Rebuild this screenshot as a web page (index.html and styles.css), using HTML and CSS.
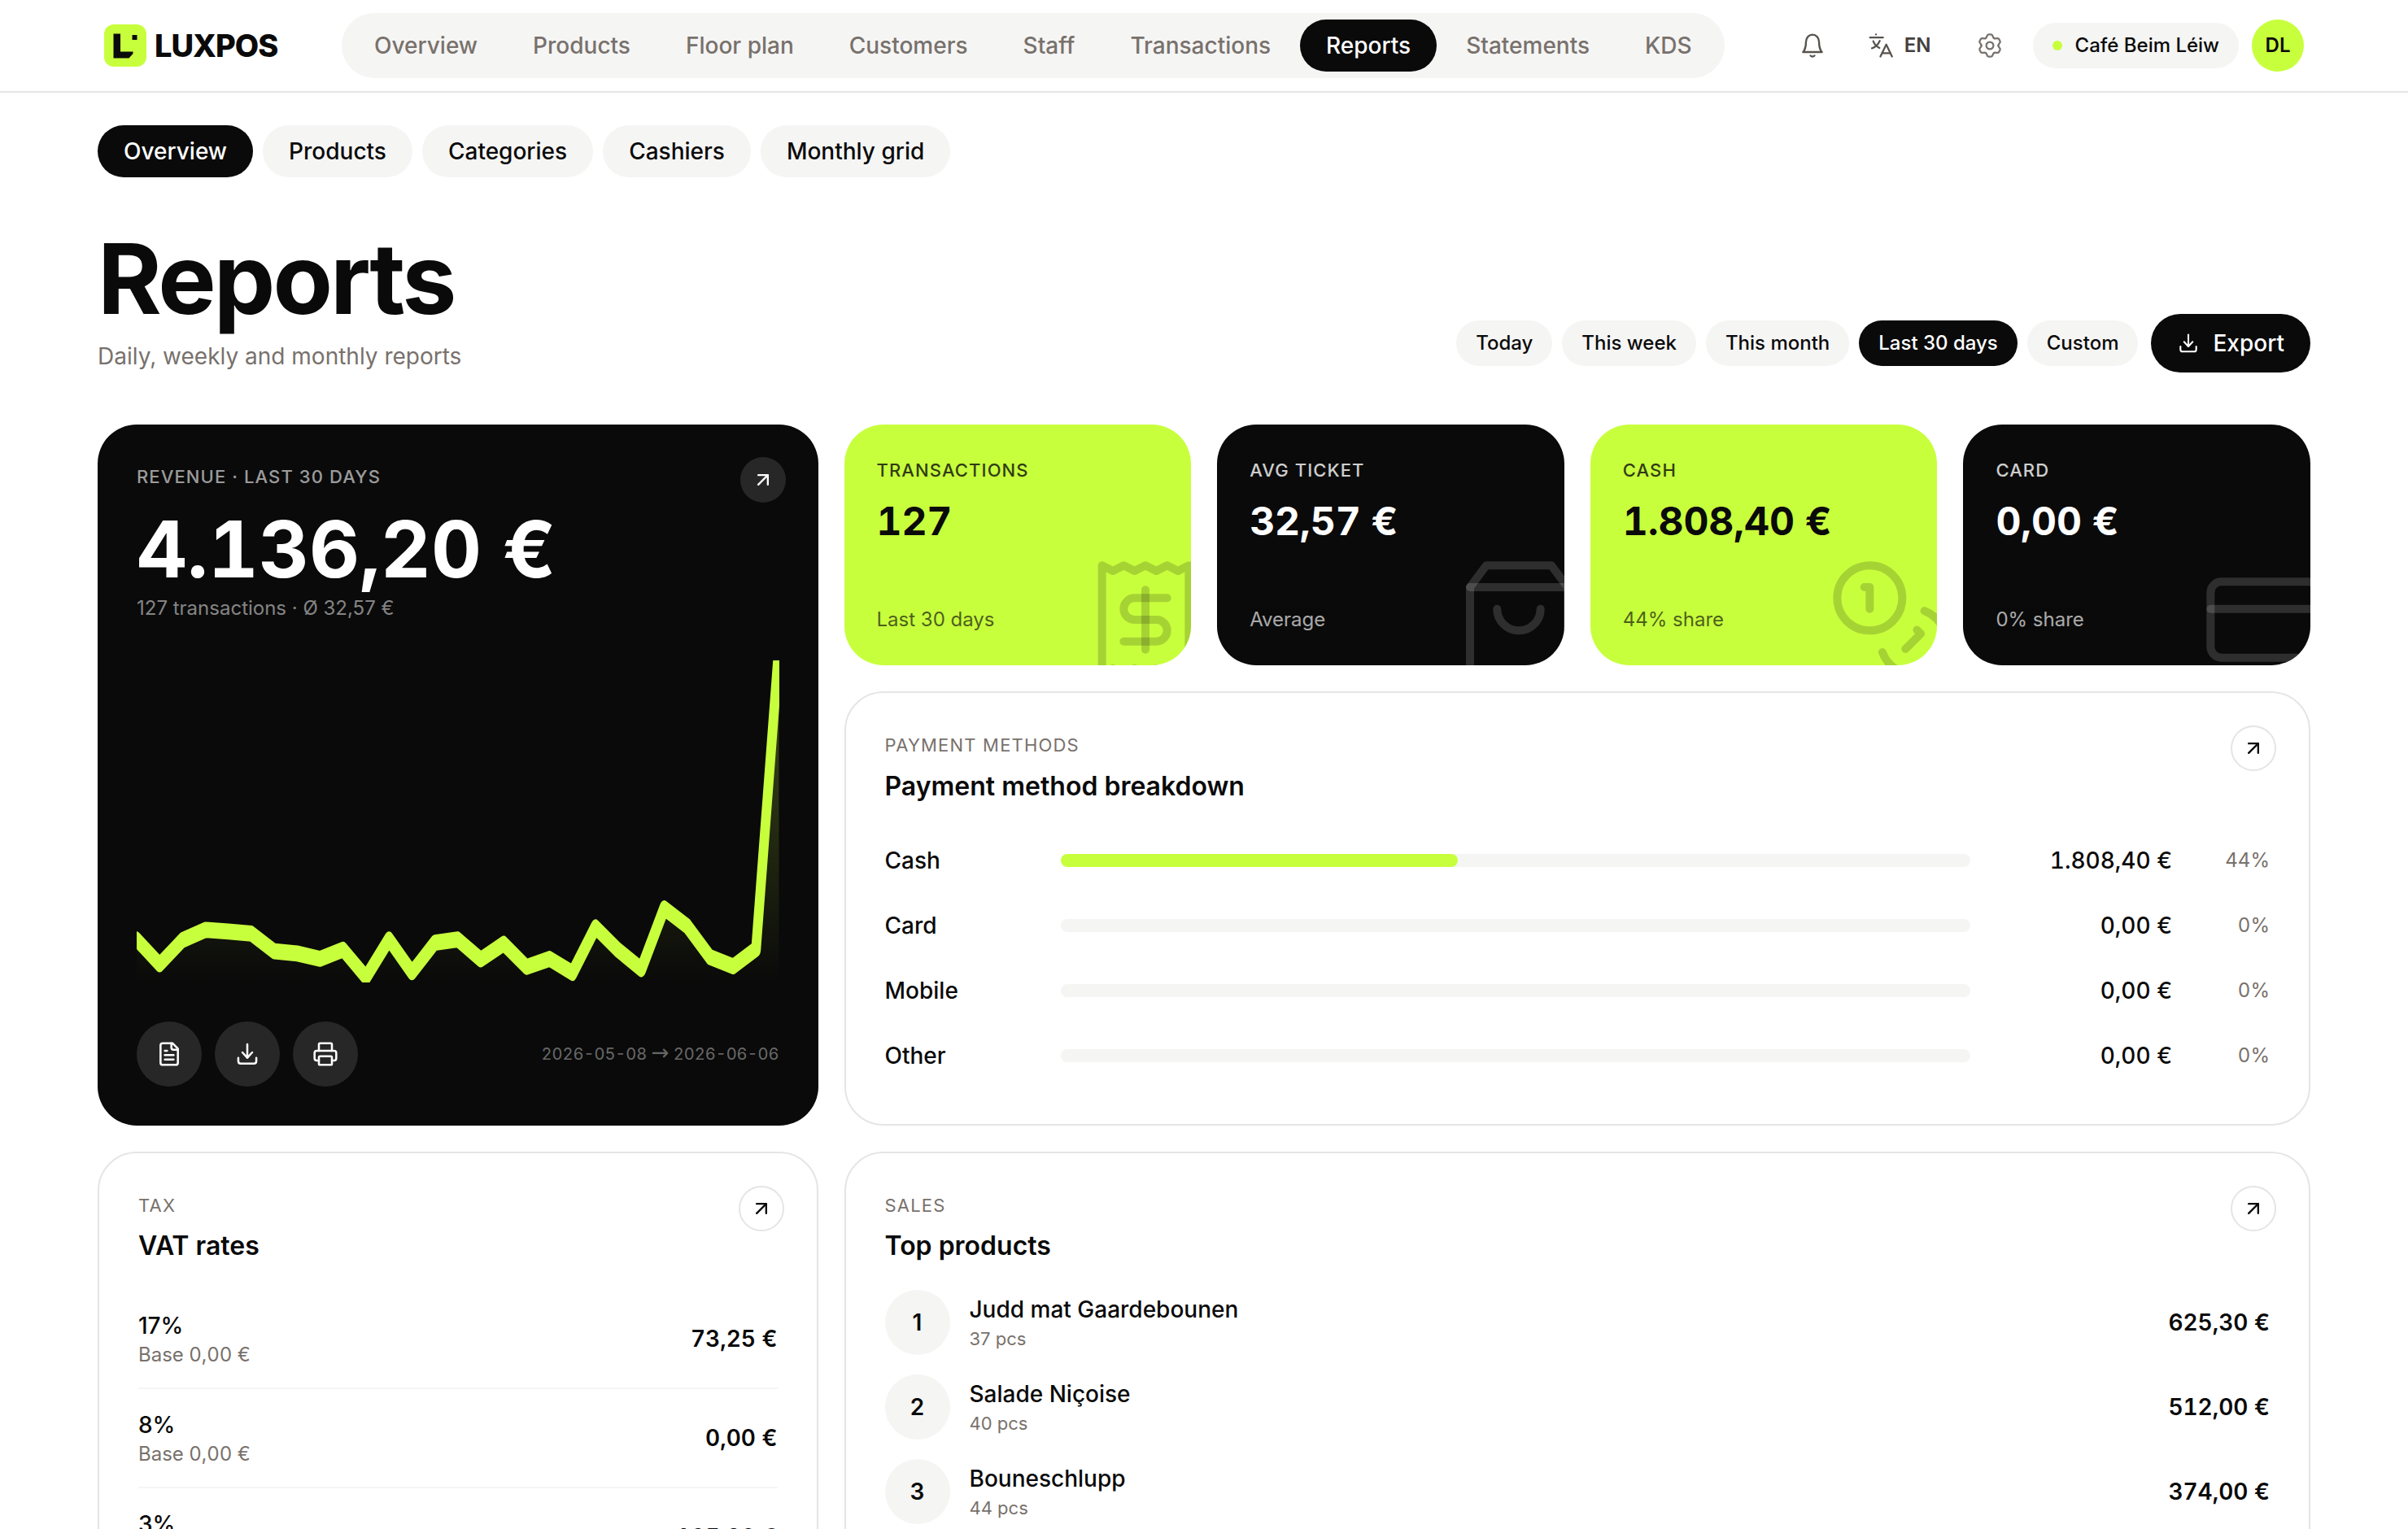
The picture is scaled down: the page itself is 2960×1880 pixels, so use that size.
FILE: index.html
```html
<!DOCTYPE html>
<html lang="en">
<head>
<meta charset="UTF-8">
<meta name="viewport" content="width=device-width, initial-scale=1.0">
<title>Reports - LUXPOS</title>
<link rel="stylesheet" href="styles.css">
</head>
<body>
<!-- shared icons -->
<svg class="sprite" xmlns="http://www.w3.org/2000/svg">
  <symbol id="arrow" viewBox="0 0 24 24"><path d="M7 7h10v10"/><path d="M7 17 17 7"/></symbol>
  <symbol id="download" viewBox="0 0 24 24"><path d="M12 3v12.2"/><path d="M7.5 10.5l4.5 4.9 4.5-4.9"/><path d="M3.7 15.5v3.1c0 1.3.9 2.2 2.2 2.2h12.2c1.3 0 2.2-.9 2.2-2.2v-3.1"/></symbol>
</svg>

<header class="topbar">
  <a class="logo" href="#">
    <svg class="logo-mark" viewBox="0 0 52 52">
      <rect width="52" height="52" rx="12" fill="#c8ff3d"/>
      <path d="M11.500 11.500h8.500v22h15.500v2.500l-5 5.500h-19z" fill="#0a0a0a"/>
      <rect x="34.500" y="13" width="6" height="6" fill="#0a0a0a"/>
    </svg>
    <span class="logo-text">LUXPOS</span>
  </a>
  <nav class="nav">
    <a href="#">Overview</a>
    <a href="#">Products</a>
    <a href="#">Floor plan</a>
    <a href="#">Customers</a>
    <a href="#">Staff</a>
    <a href="#">Transactions</a>
    <a href="#" class="active">Reports</a>
    <a href="#">Statements</a>
    <a href="#">KDS</a>
  </nav>
  <div class="tools">
    <button class="tool bell">
      <svg viewBox="0 0 24 24"><path d="M18 8.400C18 4.800 15.300 2 12 2S6 4.800 6 8.400C6 15.500 3.200 18 3.200 18h17.600S18 15.500 18 8.400Z"/><path d="M13.900 21.300c-.9 1.100-2.900 1.100-3.800 0"/></svg>
    </button>
    <button class="tool lang">
      <svg viewBox="0 0 24 24"><path d="M7.500 1.700v.1"/><path d="M2 4.600h12"/><path d="M11 7.700c-1.300 3-3.900 5.700-7.200 6.800"/><path d="M5 8c1 2.700 3.200 5 5.700 6.200"/><path d="M11.600 22.200 17 11l5.300 11.200"/><path d="M13.300 19h7.300"/></svg>
      <span>EN</span>
    </button>
    <button class="tool gear">
      <svg viewBox="-12 -12 24 24">
        <path id="lobe" d="M-3.900-6.750C-2.100-7.800-3.100-10.200-1.100-10.200H1.100C3.100-10.200 2.100-7.800 3.900-6.750"/>
        <use href="#lobe" transform="rotate(60)"/>
        <use href="#lobe" transform="rotate(120)"/>
        <use href="#lobe" transform="rotate(180)"/>
        <use href="#lobe" transform="rotate(240)"/>
        <use href="#lobe" transform="rotate(300)"/>
        <circle r="3.300"/>
      </svg>
    </button>
    <div class="store"><i class="dot"></i>Café Beim Léiw</div>
    <div class="avatar">DL</div>
  </div>
</header>

<main class="page">
  <div class="tabs">
    <a href="#" class="active">Overview</a>
    <a href="#">Products</a>
    <a href="#">Categories</a>
    <a href="#">Cashiers</a>
    <a href="#">Monthly grid</a>
  </div>

  <div class="heading">
    <div>
      <h1>Reports</h1>
      <p>Daily, weekly and monthly reports</p>
    </div>
    <div class="ranges">
      <button>Today</button>
      <button>This week</button>
      <button>This month</button>
      <button class="active">Last 30 days</button>
      <button>Custom</button>
      <button class="export"><svg><use href="#download"/></svg>Export</button>
    </div>
  </div>

  <div class="grid">
    <section class="card revenue">
      <a class="go" href="#"><svg><use href="#arrow"/></svg></a>
      <div class="label">REVENUE · LAST 30 DAYS</div>
      <div class="amount">4.136,20 €</div>
      <div class="note">127 transactions · Ø 32,57 €</div>
      <svg class="chart" viewBox="0 0 100 30" preserveAspectRatio="none">
        <defs>
          <linearGradient id="fade" x1="0" y1="0" x2="0" y2="1">
            <stop offset="0" stop-color="#c8ff3d" stop-opacity=".28"/>
            <stop offset="1" stop-color="#c8ff3d" stop-opacity="0"/>
          </linearGradient>
        </defs>
        <path class="area" d="M0 26L3.570 28.300L7.140 26.050L10.710 25.100L14.290 25.250L17.860 25.450L21.430 27.100L25 27.300L28.570 27.800L32.140 26.950L35.710 29.500L39.290 26L42.860 29.050L46.430 26.300L50 26L53.570 27.850L57.140 26.400L60.710 28.550L64.290 27.800L67.860 29.100L71.430 24.870L75 27L78.570 28.750L82.140 23.100L85.710 24.750L89.290 27.650L92.860 28.500L96.430 26.900L100 0V30H0Z"/>
        <path class="line" d="M0 26L3.570 28.300L7.140 26.050L10.710 25.100L14.290 25.250L17.860 25.450L21.430 27.100L25 27.300L28.570 27.800L32.140 26.950L35.710 29.500L39.290 26L42.860 29.050L46.430 26.300L50 26L53.570 27.850L57.140 26.400L60.710 28.550L64.290 27.800L67.860 29.100L71.430 24.870L75 27L78.570 28.750L82.140 23.100L85.710 24.750L89.290 27.650L92.860 28.500L96.430 26.900L99.900 -.5"/>
      </svg>
      <div class="actions">
        <button><svg viewBox="0 0 24 24"><path d="M15 2H6a2 2 0 0 0-2 2v16a2 2 0 0 0 2 2h12a2 2 0 0 0 2-2V7Z"/><path d="M14 2v4a2 2 0 0 0 2 2h4"/><path d="M10 9H8"/><path d="M16 13H8"/><path d="M16 17H8"/></svg></button>
        <button><svg><use href="#download"/></svg></button>
        <button><svg viewBox="0 0 24 24"><path d="M6 18H4a2 2 0 0 1-2-2v-5a2 2 0 0 1 2-2h16a2 2 0 0 1 2 2v5a2 2 0 0 1-2 2h-2"/><path d="M6 9V3a1 1 0 0 1 1-1h10a1 1 0 0 1 1 1v6"/><rect x="6" y="14" width="12" height="8" rx="1"/></svg></button>
        <span class="period">2026-05-08 <span class="to">→</span> 2026-06-06</span>
      </div>
    </section>

    <div class="stats">
      <section class="stat lime">
        <div class="label">TRANSACTIONS</div>
        <div class="value">127</div>
        <div class="note">Last 30 days</div>
        <svg viewBox="0 0 24 24"><path d="M4 2v20l2-1 2 1 2-1 2 1 2-1 2 1 2-1 2 1V2l-2 1-2-1-2 1-2-1-2 1-2-1-2 1Z"/><path d="M16 8h-6a2 2 0 1 0 0 4h4a2 2 0 1 1 0 4H8"/><path d="M12 17.500v-11"/></svg>
      </section>
      <section class="stat dark">
        <div class="label">AVG TICKET</div>
        <div class="value">32,57 €</div>
        <div class="note">Average</div>
        <svg viewBox="0 0 24 24"><path d="M6 2 3 6v14a2 2 0 0 0 2 2h14a2 2 0 0 0 2-2V6l-3-4Z"/><path d="M3 6h18"/><path d="M16 10a4 4 0 0 1-8 0"/></svg>
      </section>
      <section class="stat lime">
        <div class="label">CASH</div>
        <div class="value">1.808,40 €</div>
        <div class="note">44% share</div>
        <svg viewBox="0 0 24 24"><circle cx="8" cy="8" r="6"/><path d="M18.090 10.370A6 6 0 1 1 10.340 18"/><path d="M7 6h1v4"/><path d="m16.710 13.880.7.71-2.820 2.820"/></svg>
      </section>
      <section class="stat dark">
        <div class="label">CARD</div>
        <div class="value">0,00 €</div>
        <div class="note">0% share</div>
        <svg viewBox="0 0 24 24"><rect x="2" y="5" width="20" height="14" rx="2"/><path d="M2 10h20"/></svg>
      </section>
    </div>

    <section class="card payments">
      <a class="go" href="#"><svg><use href="#arrow"/></svg></a>
      <div class="label">PAYMENT METHODS</div>
      <h2>Payment method breakdown</h2>
      <div class="methods">
        <div class="method"><span>Cash</span><div class="bar"><div class="fill" style="width: 43.7%"></div></div><b>1.808,40 €</b><em>44%</em></div>
        <div class="method"><span>Card</span><div class="bar"></div><b>0,00 €</b><em>0%</em></div>
        <div class="method"><span>Mobile</span><div class="bar"></div><b>0,00 €</b><em>0%</em></div>
        <div class="method"><span>Other</span><div class="bar"></div><b>0,00 €</b><em>0%</em></div>
      </div>
    </section>

    <section class="card vat">
      <a class="go" href="#"><svg><use href="#arrow"/></svg></a>
      <div class="label">TAX</div>
      <h2>VAT rates</h2>
      <div class="rates">
        <div class="rate"><div><span>17%</span><small>Base 0,00 €</small></div><b>73,25 €</b></div>
        <div class="rate"><div><span>8%</span><small>Base 0,00 €</small></div><b>0,00 €</b></div>
        <div class="rate"><div><span>3%</span><small>Base 0,00 €</small></div><b>105,80 €</b></div>
      </div>
    </section>

    <section class="card products">
      <a class="go" href="#"><svg><use href="#arrow"/></svg></a>
      <div class="label">SALES</div>
      <h2>Top products</h2>
      <div class="items">
        <div class="item"><i>1</i><div><span>Judd mat Gaardebounen</span><small>37 pcs</small></div><b>625,30 €</b></div>
        <div class="item"><i>2</i><div><span>Salade Niçoise</span><small>40 pcs</small></div><b>512,00 €</b></div>
        <div class="item"><i>3</i><div><span>Bouneschlupp</span><small>44 pcs</small></div><b>374,00 €</b></div>
      </div>
    </section>
  </div>
</main>
</body>
</html>
```
FILE: styles.css
```css
* {
  box-sizing: border-box;
  margin: 0;
  padding: 0;
}

body {
  height: 1880px;
  overflow: hidden;
  background: #fff;
  color: #0a0a0a;
  font-family: Inter, "Liberation Sans", sans-serif;
  font-size: 28px;
  line-height: 40px;
}

a {
  color: inherit;
  text-decoration: none;
}

button {
  border: none;
  background: none;
  font: inherit;
  color: inherit;
  cursor: pointer;
}

svg {
  fill: none;
  stroke: currentColor;
  stroke-width: 1.5;
  stroke-linecap: round;
  stroke-linejoin: round;
}

.sprite {
  display: none;
}

/* top bar */
.topbar {
  display: flex;
  align-items: center;
  height: 114px;
  padding: 0 128px;
  border-bottom: 2px solid #e5e5e5;
}

.logo {
  display: flex;
  align-items: center;
  gap: 10px;
  width: 292px;
}

.logo-mark {
  width: 52px;
  height: 52px;
  stroke: none;
}

.logo-text {
  font-size: 38px;
  font-weight: 800;
  letter-spacing: -1px;
}

.nav {
  display: flex;
  gap: 4px;
  padding: 8px;
  border-radius: 40px;
  background: #f5f5f4;
  color: #78716c;
  font-weight: 500;
}

.nav a,
.tabs a {
  padding: 12px 32px;
  border-radius: 32px;
}

.nav .active,
.tabs .active {
  background: #0a0a0a;
  color: #fff;
}

.tools {
  display: flex;
  align-items: center;
  gap: 16px;
  margin-left: auto;
  font-size: 24px;
  font-weight: 500;
}

.tool {
  display: flex;
  align-items: center;
  justify-content: center;
  gap: 13px;
  height: 64px;
  color: #57534e;
}

.tool svg {
  width: 32px;
  height: 32px;
  stroke-width: 1.7;
}

.bell {
  width: 64px;
}

.lang {
  padding: 0 19px 0 20px;
  font-weight: 600;
}

.lang span {
  color: #44403c;
}

.gear {
  width: 74px;
  color: #78716c;
}

.store {
  display: flex;
  align-items: center;
  gap: 16px;
  height: 56px;
  padding: 0 24px;
  border-radius: 28px;
  background: #f5f5f4;
}

.dot {
  width: 12px;
  height: 12px;
  border-radius: 50%;
  background: #c8ff3d;
}

.avatar {
  width: 64px;
  border-radius: 50%;
  background: #c8ff3d;
  font-weight: 600;
  line-height: 64px;
  text-align: center;
}

/* page */
.page {
  padding: 40px 120px 0;
}

.tabs {
  display: flex;
  gap: 12px;
  font-weight: 500;
}

.tabs a {
  background: #f5f5f4;
}

.heading {
  display: flex;
  justify-content: space-between;
  align-items: flex-end;
  margin: 64px 0;
}

h1 {
  margin-bottom: 15px;
  padding-top: 1px;
  font-size: 120px;
  font-weight: 700;
  line-height: 120px;
  letter-spacing: -3px;
}

.heading p {
  color: #78716c;
}

.ranges {
  display: flex;
  align-items: center;
  gap: 12px;
}

.ranges button {
  height: 56px;
  padding: 0 24px;
  border-radius: 28px;
  background: #f5f5f4;
  font-size: 24px;
  font-weight: 500;
}

.ranges .active,
.ranges .export {
  background: #0a0a0a;
  color: #fff;
}

.ranges .export {
  display: flex;
  align-items: center;
  gap: 16px;
  height: 72px;
  margin-left: 4px;
  padding: 0 32px;
  border-radius: 36px;
  font-size: 28px;
}

.export svg {
  width: 28px;
  height: 28px;
  stroke-width: 1.8;
}

.grid {
  display: grid;
  grid-template-columns: 885.5px 1fr;
  grid-template-rows: 296px 534px 600px;
  gap: 32px;
}

.card {
  position: relative;
  padding: 48px;
  border: 2px solid #e5e5e5;
  border-radius: 48px;
}

.label {
  color: #78716c;
  font-size: 22px;
  line-height: 32px;
  letter-spacing: 1.2px;
}

h2 {
  margin-top: 14px;
  font-size: 32px;
  font-weight: 600;
  line-height: 40px;
}

b {
  font-weight: 600;
  font-variant-numeric: tabular-nums;
}

.go {
  position: absolute;
  top: 40px;
  right: 40px;
  display: flex;
  align-items: center;
  justify-content: center;
  width: 56px;
  height: 56px;
  border: 2px solid #e5e5e5;
  border-radius: 50%;
}

.go svg {
  width: 28px;
  height: 28px;
  stroke-width: 2;
}

/* revenue */
.revenue {
  display: flex;
  flex-direction: column;
  grid-row: span 2;
  border: none;
  background: #0a0a0a;
  color: #fff;
}

.revenue .go {
  border: none;
  background: rgba(255, 255, 255, 0.12);
}

.revenue .label {
  color: rgba(255, 255, 255, 0.6);
  font-weight: 500;
  letter-spacing: 1.1px;
}

.amount {
  margin: 25px 0 7px;
  font-size: 96px;
  font-weight: 700;
  line-height: 96px;
  font-variant-numeric: tabular-nums;
}

.note {
  font-size: 24px;
  line-height: 36px;
}

.revenue .note {
  color: rgba(255, 255, 255, 0.5);
}

.chart {
  width: 100%;
  height: 396px;
  margin-top: 46px;
}

.area {
  fill: url(#fade);
  stroke: none;
}

.line {
  stroke: #c8ff3d;
}

.actions {
  display: flex;
  align-items: center;
  gap: 16px;
  margin-top: 48px;
}

.actions button {
  display: flex;
  align-items: center;
  justify-content: center;
  width: 80px;
  height: 80px;
  border-radius: 50%;
  background: rgba(255, 255, 255, 0.12);
}

.actions svg {
  width: 32px;
  height: 32px;
  stroke-width: 1.9;
}

.period {
  margin-left: auto;
  color: rgba(255, 255, 255, 0.4);
  font-size: 20px;
  font-variant-numeric: tabular-nums;
}

.to {
  font-family: "DejaVu Sans", sans-serif;
  font-size: 26px;
  line-height: 0;
}

/* stat tiles */
.stats {
  display: grid;
  grid-template-columns: repeat(4, 1fr);
  gap: 32px;
}

.stat {
  position: relative;
  display: flex;
  flex-direction: column;
  padding: 40px 40px 38px;
  border-radius: 48px;
  overflow: hidden;
}

.stat .label {
  color: inherit;
  font-weight: 500;
  letter-spacing: 1.1px;
  opacity: 0.8;
}

.value {
  margin-top: 23px;
  font-size: 48px;
  font-weight: 700;
  line-height: 48px;
  letter-spacing: -0.1px;
  font-variant-numeric: tabular-nums;
}

.stat .note {
  margin-top: auto;
  opacity: 0.65;
}

.stat svg {
  position: absolute;
  right: -24px;
  bottom: -24px;
  width: 160px;
  height: 160px;
}

.lime {
  background: #c8ff3d;
}

.lime svg {
  stroke: rgba(10, 10, 10, 0.18);
}

.dark {
  background: #0a0a0a;
  color: #fff;
}

.dark svg {
  stroke: rgba(255, 255, 255, 0.15);
}

/* payment methods */
.payments h2 {
  margin: 15px 0 -1px;
}

.methods {
  display: grid;
  gap: 40px;
  margin-top: 52px;
}

.method {
  display: grid;
  grid-template-columns: 192px 1fr 224px 96px;
  column-gap: 24px;
  align-items: center;
  font-weight: 500;
}

.method b,
.method em {
  text-align: right;
}

.method b {
  font-weight: 500;
}

.method em {
  color: #78716c;
  font-size: 24px;
  font-style: normal;
  font-weight: 400;
  font-variant-numeric: tabular-nums;
}

.bar {
  height: 16px;
  border-radius: 8px;
  background: #f5f5f4;
}

.fill {
  height: 16px;
  border-radius: 8px;
  background: #c8ff3d;
}

/* vat + products */
.rates,
.items {
  margin-top: 34px;
}

.rate {
  display: flex;
  align-items: center;
  justify-content: space-between;
  padding: 24px 0;
  border-bottom: 2px solid #f5f5f4;
}

.rate span,
.item span {
  display: block;
  font-weight: 500;
}

small {
  display: block;
  color: #78716c;
  font-size: 24px;
  line-height: 32px;
}

.rate small {
  font-variant-numeric: tabular-nums;
}

.items {
  display: grid;
  gap: 24px;
}

.item {
  display: flex;
  align-items: center;
  gap: 24px;
}

.item i {
  width: 80px;
  border-radius: 50%;
  background: #f5f5f4;
  font-style: normal;
  font-weight: 600;
  line-height: 80px;
  text-align: center;
}

.item small {
  font-size: 22px;
}

.item b {
  margin-left: auto;
}
```
